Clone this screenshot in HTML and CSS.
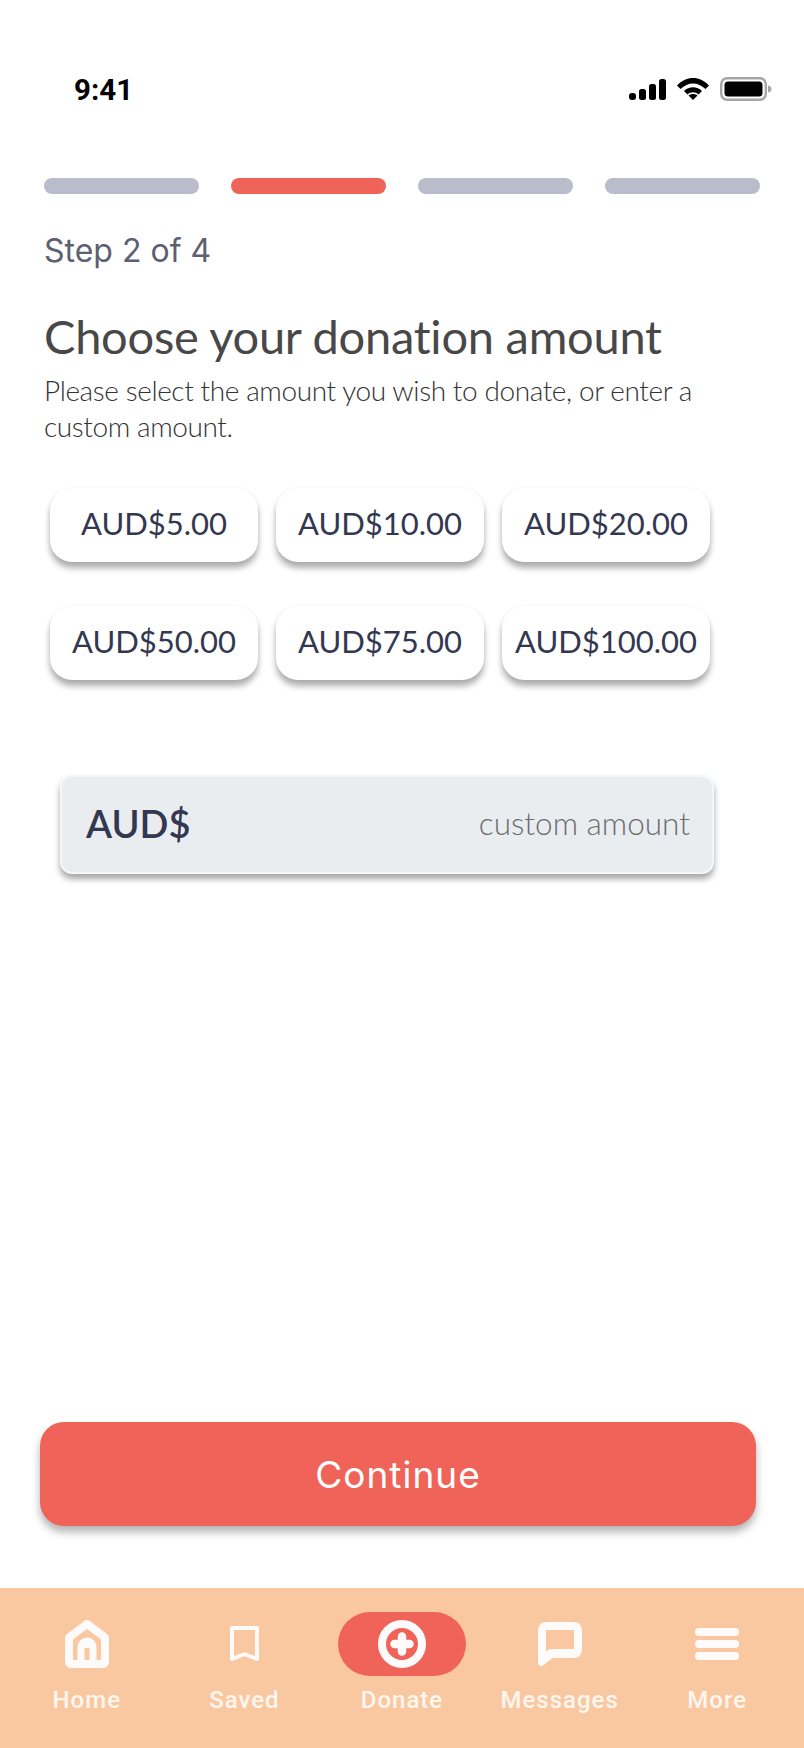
FILE: index.html
```html
<!DOCTYPE html>
<html lang="en">
<head>
  <meta charset="UTF-8" />
  <meta name="viewport" content="width=device-width, initial-scale=1.0"/>
  <title>Donate</title>
  <link rel="stylesheet" href="styles.css">
</head>
<body>
  <div class="screen">
    <div class="status-bar">
      <span class="time">9:41</span>
      <div class="status-icons">
        <svg width="37" height="21" viewBox="0 0 37 21"><rect x="0" y="14" width="7" height="7" rx="3" fill="#000"/><rect x="10" y="10" width="7" height="11" rx="2.5" fill="#000"/><rect x="20" y="5" width="7" height="16" rx="2.5" fill="#000"/><rect x="30" y="0" width="7" height="21" rx="2.5" fill="#000"/></svg>
        <svg width="32" height="22" viewBox="0 0 32 22"><path d="M0 7.5 C9 -2.5 23 -2.5 32 7.5 L28.5 11 C21 3.5 11 3.500 3.500 11 Z" fill="#000"/><path d="M7 13 C12 8 20 8 25 13 L21.500 16.500 C18.500 13.500 13.500 13.500 10.500 16.500 Z" fill="#000"/><path d="M11.500 17.500 C14 15.500 18 15.500 20.500 17.500 L16 22 Z" fill="#000"/></svg>
        <svg width="52" height="24" viewBox="0 0 52 24"><rect x="1.200" y="1.200" width="44.600" height="21.600" rx="6" fill="none" stroke="#a6a6a6" stroke-width="2.400"/><rect x="4.500" y="4.500" width="38" height="15" rx="3.500" fill="#000"/><path d="M48 8.500 C50.500 9 51.500 10.500 51.500 12 C51.500 13.500 50.500 15 48 15.500 Z" fill="#a6a6a6"/></svg>
      </div>
    </div>

    <main class="content">
      <div class="steps">
        <div class="step"></div>
        <div class="step active"></div>
        <div class="step"></div>
        <div class="step"></div>
      </div>
      <p class="step-label">Step 2 of 4</p>
      <h1>Choose your donation amount</h1>
      <p class="intro">Please select the amount you wish to donate, or enter a custom amount.</p>

      <div class="amounts">
        <button class="amount" type="button">AUD$5.00</button>
        <button class="amount" type="button">AUD$10.00</button>
        <button class="amount" type="button">AUD$20.00</button>
        <button class="amount" type="button">AUD$50.00</button>
        <button class="amount" type="button">AUD$75.00</button>
        <button class="amount" type="button">AUD$100.00</button>
      </div>

      <div class="custom">
        <span class="currency">AUD$</span>
        <span class="custom-hint">custom amount</span>
      </div>

      <button class="continue" type="button">Continue</button>
    </main>

    <nav class="tabs">
      <a class="tab">
        <span class="tab-icon">
          <svg width="44" height="48" viewBox="0 0 44 48"><path fill-rule="evenodd" d="M19.600 0.800a4 4 0 0 1 4.800 0l17 12.600a6 6 0 0 1 2.600 5V42a6 6 0 0 1-6 6H6a6 6 0 0 1-6-6V18.400a6 6 0 0 1 2.600-5zM22 9L8 19.400V40h4.500V27a9.500 9.500 0 0 1 19 0v13H36V19.400zM19.500 28v12h5V28z" fill="#fffbfb"/></svg>
        </span>
        <span class="tab-label">Home</span>
      </a>
      <a class="tab">
        <span class="tab-icon">
          <svg width="29" height="36" viewBox="0 0 29 36"><path d="M2 2H27V33L14.500 28L2 33Z" fill="none" stroke="#fffbfb" stroke-width="4" stroke-linejoin="round"/></svg>
        </span>
        <span class="tab-label">Saved</span>
      </a>
      <a class="tab">
        <span class="tab-icon donate-pill">
          <svg width="48" height="48" viewBox="0 0 48 48"><circle cx="24" cy="24" r="20" fill="none" stroke="#fffbfb" stroke-width="8"/><path d="M24 16.500V31.500M16.500 24H31.500" stroke="#fffbfb" stroke-width="8.500" stroke-linecap="round"/></svg>
        </span>
        <span class="tab-label">Donate</span>
      </a>
      <a class="tab">
        <span class="tab-icon">
          <svg width="44" height="44" viewBox="0 0 44 44"><path fill-rule="evenodd" d="M8 0H36a8 8 0 0 1 8 8V28a8 8 0 0 1-8 8H14.500L5 43.500C3 45 0 43.500 0 41V8a8 8 0 0 1 8-8zM8 8V29.500L12 27H36V8z" fill="#fffbfb"/></svg>
        </span>
        <span class="tab-label">Messages</span>
      </a>
      <a class="tab">
        <span class="tab-icon">
          <span class="menu-icon"><i></i><i></i><i></i></span>
        </span>
        <span class="tab-label">More</span>
      </a>
    </nav>
  </div>
</body>
</html>
```

FILE: styles.css
```css
* {
  box-sizing: border-box;
}
body {
  margin: 0;
  font-family: "Lato", Arial, sans-serif;
  font-variant-ligatures: none;
  background-color: #fff;
}
.screen {
  width: 804px;
  height: 1748px;
  display: flex;
  flex-direction: column;
  overflow: hidden;
}

/* status bar */
.status-bar {
  height: 178px;
  padding: 77px 32px 0 74px;
  display: flex;
  justify-content: space-between;
  align-items: flex-start;
}
.time {
  font-family: "Roboto", sans-serif;
  font-weight: 700;
  font-size: 29.5px;
  line-height: 26px;
  color: #000;
}
.status-icons {
  display: flex;
  align-items: center;
  gap: 11px;
}

/* main */
.content {
  flex: 1;
  padding: 0 48px 0 40px;
  display: flex;
  flex-direction: column;
}
.steps {
  display: flex;
  gap: 32px;
  margin: 0 -4px 0 4px;
}
.step {
  flex: 1;
  height: 16px;
  border-radius: 8px;
  background-color: #b9bccb;
}
.step.active {
  background-color: #f06359;
}
.step-label {
  margin: 37px 0 0 4px;
  font-family: "Inter", sans-serif;
  font-size: 32px;
  line-height: 40px;
  color: #5d6070;
}
h1 {
  margin: 37px 0 0 4px;
  font-weight: 400;
  font-size: 47px;
  line-height: 56px;
  letter-spacing: -0.25px;
  color: #484848;
}
.intro {
  margin: 8px 0 0 4px;
  width: 680px;
  font-weight: 300;
  font-size: 28px;
  line-height: 36px;
  letter-spacing: -0.4px;
  color: #333;
}
.amounts {
  margin: 44px 0 0 10px;
  display: grid;
  grid-template-columns: repeat(3, 208px);
  grid-auto-rows: 74px;
  gap: 44px 18px;
}
.amount {
  border: none;
  border-radius: 22px;
  background-color: #fff;
  font-family: "Lato", sans-serif;
  font-size: 31px;
  color: #333850;
  padding: 0 0 4px;
  box-shadow: 0 6px 6px rgba(0,0,0,0.32), 0 0 4px rgba(0,0,0,0.04);
}
.custom {
  margin: 95px 0 0 20px;
  width: 654px;
  height: 99px;
  padding: 0 22px 3px 24px;
  display: flex;
  justify-content: space-between;
  align-items: center;
  border: 2px solid #f5f6f8;
  border-radius: 12px;
  background-color: #eaedf0;
  box-shadow: 0 5px 6px rgba(0,0,0,0.35);
}
.currency {
  font-weight: 600;
  font-size: 38px;
  color: #333850;
}
.custom-hint {
  font-weight: 300;
  font-size: 31.5px;
  color: #6c6c70;
}
.continue {
  margin-top: auto;
  margin-bottom: 62px;
  height: 104px;
  border: none;
  border-radius: 24px;
  background-color: #f06359;
  color: #fff;
  font-family: "Inter", sans-serif;
  font-size: 37px;
  letter-spacing: 1px;
  box-shadow: 0 6px 8px rgba(0,0,0,0.3);
}

/* bottom nav */
.tabs {
  height: 160px;
  padding: 24px 8px 0;
  background-color: #f9c8a0;
  display: grid;
  grid-template-columns: repeat(5, 1fr);
}
.tab {
  display: flex;
  flex-direction: column;
  align-items: center;
}
.tab-icon {
  height: 64px;
  display: flex;
  align-items: center;
  justify-content: center;
}
.donate-pill {
  width: 128px;
  border-radius: 32px;
  background-color: #f06359;
}
.menu-icon {
  width: 44px;
  display: flex;
  flex-direction: column;
  gap: 4px;
}
.menu-icon i {
  height: 8px;
  border-radius: 4px;
  background-color: #fffbfb;
}
.tab-label {
  margin-top: 10px;
  font-family: "Roboto", sans-serif;
  font-weight: 500;
  font-size: 24px;
  line-height: 28px;
  letter-spacing: 1px;
  color: #fff6ef;
}
```
